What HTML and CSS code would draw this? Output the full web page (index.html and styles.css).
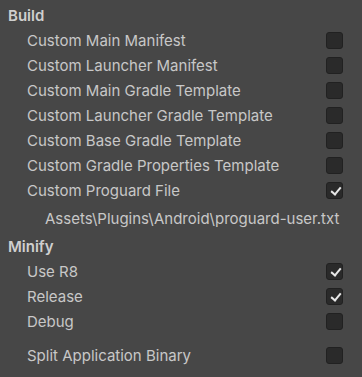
FILE: index.html
```html
<!DOCTYPE html>
<html lang="en">
<head>
    <meta charset="UTF-8">
    <meta name="viewport" content="width=device-width, initial-scale=1.0">
    <title>Publishing Settings</title>
    <link rel="stylesheet" href="styles.css">
</head>
<body>
    <div class="panel">
        <div class="header">Build</div>
        <div class="rand"><span>Custom Main Manifest</span><span class="bifa"></span></div>
        <div class="rand"><span>Custom Launcher Manifest</span><span class="bifa"></span></div>
        <div class="rand"><span>Custom Main Gradle Template</span><span class="bifa"></span></div>
        <div class="rand"><span>Custom Launcher Gradle Template</span><span class="bifa"></span></div>
        <div class="rand"><span>Custom Base Gradle Template</span><span class="bifa"></span></div>
        <div class="rand"><span>Custom Gradle Properties Template</span><span class="bifa"></span></div>
        <div class="rand"><span>Custom Proguard File</span><span class="bifa bifat"></span></div>
        <div class="cale">Assets\Plugins\Android\proguard-user.txt</div>

        <div class="header">Minify</div>
        <div class="rand"><span>Use R8</span><span class="bifa bifat"></span></div>
        <div class="rand"><span>Release</span><span class="bifa bifat"></span></div>
        <div class="rand"><span>Debug</span><span class="bifa"></span></div>

        <div class="rand separat"><span>Split Application Binary</span><span class="bifa"></span></div>
    </div>
</body>
</html>
```

FILE: styles.css
```css
body {
    margin: 0;
    background-color: #474747;
    color: #c8c8c8;
    font-family: Inter, "Noto Sans", sans-serif;
    font-size: 15px;
}
.panel {
    padding: 3px 19px 0 8px;
}
.header {
    height: 25px;
    line-height: 25px;
    font-weight: 600;
    color: #cfcfcf;
}
.rand {
    display: flex;
    justify-content: space-between;
    align-items: center;
    height: 25px;
    padding-left: 19px;
}
.separat {
    margin-top: 9px;
}
.cale {
    height: 31px;
    line-height: 31px;
    padding-left: 37px;
}
.bifa {
    box-sizing: border-box;
    width: 17px;
    height: 17px;
    background-color: #2a2a2a;
    border: 1px solid #212121;
    border-radius: 3px;
    position: relative;
}
.bifat::after {
    content: "";
    position: absolute;
    left: 4px;
    top: 2px;
    width: 8px;
    height: 4px;
    border-left: 2px solid #e8e8e8;
    border-bottom: 2px solid #e8e8e8;
    transform: translate(0, 2px) rotate(-50deg);
}
```
